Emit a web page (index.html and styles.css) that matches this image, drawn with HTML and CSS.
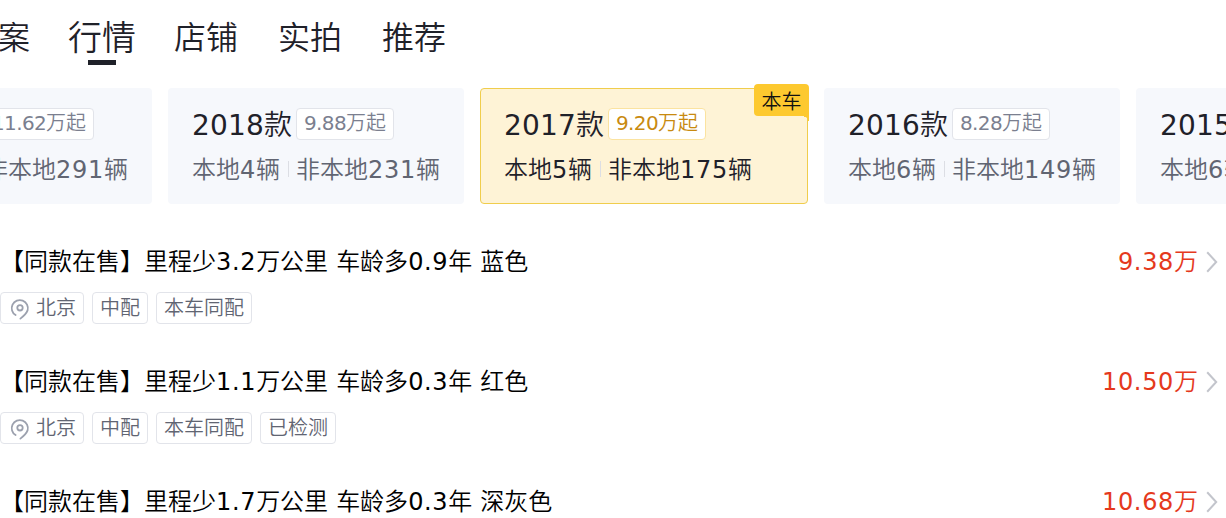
FILE: index.html
```html
<!DOCTYPE html>
<html lang="zh-CN">
<head>
    <meta charset="UTF-8">
    <meta name="viewport" content="width=device-width, initial-scale=1.0">
    <title>行情</title>
    <link rel="stylesheet" href="styles.css">
</head>
<body>

    <!-- Shared icons -->
    <svg class="icon-defs" width="0" height="0">
        <symbol id="icon-pin" viewBox="0 0 20 22">
            <path d="M5.6 17.1A8.1 8.1 0 1 1 17.6 12.4C16.5 15.4 13.5 18.2 10.4 20.6" fill="none" stroke="#9ca1ae" stroke-width="1.8" stroke-linecap="round" />
            <circle cx="10" cy="9.8" r="2.7" fill="none" stroke="#9ca1ae" stroke-width="1.8" />
        </symbol>
        <symbol id="icon-arrow" viewBox="0 0 12 22">
            <path d="M1.2 1.2L10.2 11L1.2 20.8" fill="none" stroke="#c3c5cc" stroke-width="2" />
        </symbol>
    </svg>

    <!-- Tabs -->
    <nav class="tabs">
        <a class="tab">方案</a>
        <a class="tab active"><span class="tab-text">行情</span></a>
        <a class="tab">店铺</a>
        <a class="tab">实拍</a>
        <a class="tab">推荐</a>
    </nav>

    <!-- Model years -->
    <div class="years">
        <div class="year-card">
            <div class="year-head"><span class="year"><span class="num">2019</span>款</span><span class="from"><span class="num">11.62</span>万起</span></div>
            <div class="year-count"><span>本地<span class="num">8</span>辆</span><i class="line"></i><span>非本地<span class="num">291</span>辆</span></div>
        </div>
        <div class="year-card">
            <div class="year-head"><span class="year"><span class="num">2018</span>款</span><span class="from"><span class="num">9.88</span>万起</span></div>
            <div class="year-count"><span>本地<span class="num">4</span>辆</span><i class="line"></i><span>非本地<span class="num">231</span>辆</span></div>
        </div>
        <div class="year-card current">
            <span class="current-tag">本车</span>
            <div class="year-head"><span class="year"><span class="num">2017</span>款</span><span class="from"><span class="num">9.20</span>万起</span></div>
            <div class="year-count"><span>本地<span class="num">5</span>辆</span><i class="line"></i><span>非本地<span class="num">175</span>辆</span></div>
        </div>
        <div class="year-card">
            <div class="year-head"><span class="year"><span class="num">2016</span>款</span><span class="from"><span class="num">8.28</span>万起</span></div>
            <div class="year-count"><span>本地<span class="num">6</span>辆</span><i class="line"></i><span>非本地<span class="num">149</span>辆</span></div>
        </div>
        <div class="year-card">
            <div class="year-head"><span class="year"><span class="num">2015</span>款</span></div>
            <div class="year-count"><span>本地<span class="num">6</span>辆</span></div>
        </div>
    </div>

    <!-- Cars on sale -->
    <ul class="cars">
        <li class="car">
            <div class="car-head">
                <h3 class="car-title">【同款在售】里程少<span class="num">3.2</span>万公里<span class="gap"></span>车龄多<span class="num">0.9</span>年<span class="gap"></span>蓝色</h3>
                <span class="price"><span class="num">9.38</span>万</span>
                <svg class="arrow"><use href="#icon-arrow" /></svg>
            </div>
            <div class="chips">
                <span class="chip"><svg class="pin"><use href="#icon-pin" /></svg>北京</span>
                <span class="chip">中配</span>
                <span class="chip">本车同配</span>
            </div>
        </li>
        <li class="car">
            <div class="car-head">
                <h3 class="car-title">【同款在售】里程少<span class="num">1.1</span>万公里<span class="gap"></span>车龄多<span class="num">0.3</span>年<span class="gap"></span>红色</h3>
                <span class="price"><span class="num">10.50</span>万</span>
                <svg class="arrow"><use href="#icon-arrow" /></svg>
            </div>
            <div class="chips">
                <span class="chip"><svg class="pin"><use href="#icon-pin" /></svg>北京</span>
                <span class="chip">中配</span>
                <span class="chip">本车同配</span>
                <span class="chip">已检测</span>
            </div>
        </li>
        <li class="car">
            <div class="car-head">
                <h3 class="car-title">【同款在售】里程少<span class="num">1.7</span>万公里<span class="gap"></span>车龄多<span class="num">0.3</span>年<span class="gap"></span>深灰色</h3>
                <span class="price"><span class="num">10.68</span>万</span>
                <svg class="arrow"><use href="#icon-arrow" /></svg>
            </div>
        </li>
    </ul>

</body>
</html>
```
FILE: styles.css
```css
/* General styling */
* {
    box-sizing: border-box;
}
body {
    font-family: "Noto Sans CJK SC", sans-serif;
    font-weight: 350;
    background-color: #fff;
    margin: 0;
    height: 518px;
    overflow: hidden;
    color: #1f2129;
    white-space: nowrap;
}
.icon-defs {
    display: block;
}
.num {
    font-family: "DejaVu Sans", sans-serif;
    font-weight: 400;
    letter-spacing: 0.65px;
}

/* Tabs */
.tabs {
    display: flex;
    gap: 40px;
    height: 76px;
    margin-left: -34px;
}
.tab {
    position: relative;
    width: 64px;
    height: 76px;
    font-size: 32px;
    line-height: 70px;
}
.tab-text {
    display: block;
    transform: scale(1.06);
}
.tab.active::after {
    content: "";
    position: absolute;
    left: 18px;
    top: 60px;
    width: 28px;
    height: 5px;
    background-color: #1f2129;
}

/* Model years */
.years {
    display: flex;
    gap: 16px;
    margin-left: -144px;
    padding-top: 12px;
}
.year-card {
    position: relative;
    flex: none;
    width: 296px;
    height: 116px;
    padding: 20px 24px 0;
    border-radius: 4px;
    background-color: #f6f8fc;
}
.year-head {
    display: flex;
    align-items: center;
    gap: 4px;
    height: 32px;
}
.year {
    width: 100px;
    font-size: 28px;
    line-height: 32px;
}
.year .num {
    letter-spacing: 0.19px;
}
.from {
    height: 32px;
    padding: 0 7px;
    border: 1px solid #e2e4ea;
    border-radius: 4px;
    background-color: #fff;
    color: #7b7f8f;
    font-size: 20px;
    line-height: 25px;
}
.from .num {
    letter-spacing: -0.63px;
}
.year-count {
    display: flex;
    align-items: center;
    height: 36px;
    margin-top: 11px;
    color: #616572;
    font-size: 24px;
    line-height: 36px;
}
.year-count .num {
    letter-spacing: 0.73px;
}
.line {
    width: 1px;
    height: 16px;
    margin: 0 7px 0 8px;
    background-color: #dcdee4;
}

/* Card of the car being viewed */
.year-card.current {
    width: 328px;
    padding: 19px 23px 0;
    border: 1px solid #f0cd4c;
    background-color: #fef3d6;
}
.current .from {
    border-color: #fbe3a0;
    color: #c88a10;
}
.current .year-count {
    color: #1f2129;
}
.current-tag {
    position: absolute;
    top: -5px;
    right: -2px;
    width: 55px;
    height: 32px;
    border-radius: 4px 4px 0 4px;
    background-color: #fdc92f;
    font-size: 20px;
    line-height: 33px;
    text-align: center;
    color: #111;
}
.current-tag::after {
    content: "";
    position: absolute;
    right: 0;
    top: 32px;
    width: 5px;
    height: 5px;
    background: radial-gradient(circle at 0 100%, transparent 4px, #fdc92f 4.5px);
}

/* Car list */
.cars {
    margin: 0;
    padding: 39px 0 0;
    list-style: none;
}
.car {
    height: 120px;
}
.car-head {
    display: flex;
    align-items: center;
    height: 36px;
    padding-right: 8px;
    font-size: 24px;
    line-height: 36px;
}
.car-title {
    flex: 1;
    margin: 0;
    color: #000;
    font-size: 24px;
    font-weight: 350;
}
.gap {
    display: inline-block;
    width: 8px;
}
.price {
    color: #e5391d;
}
.arrow {
    width: 12px;
    height: 22px;
    margin: 1px 0 0 8px;
}
.chips {
    display: flex;
    gap: 8px;
    margin-top: 13px;
}
.chip {
    display: flex;
    height: 32px;
    padding: 0 7px;
    border: 1px solid #e2e4ea;
    border-radius: 4px;
    color: #616572;
    font-size: 20px;
    line-height: 27px;
}
.pin {
    width: 20px;
    height: 22px;
    margin: 5px 6px 0 2px;
}
```
